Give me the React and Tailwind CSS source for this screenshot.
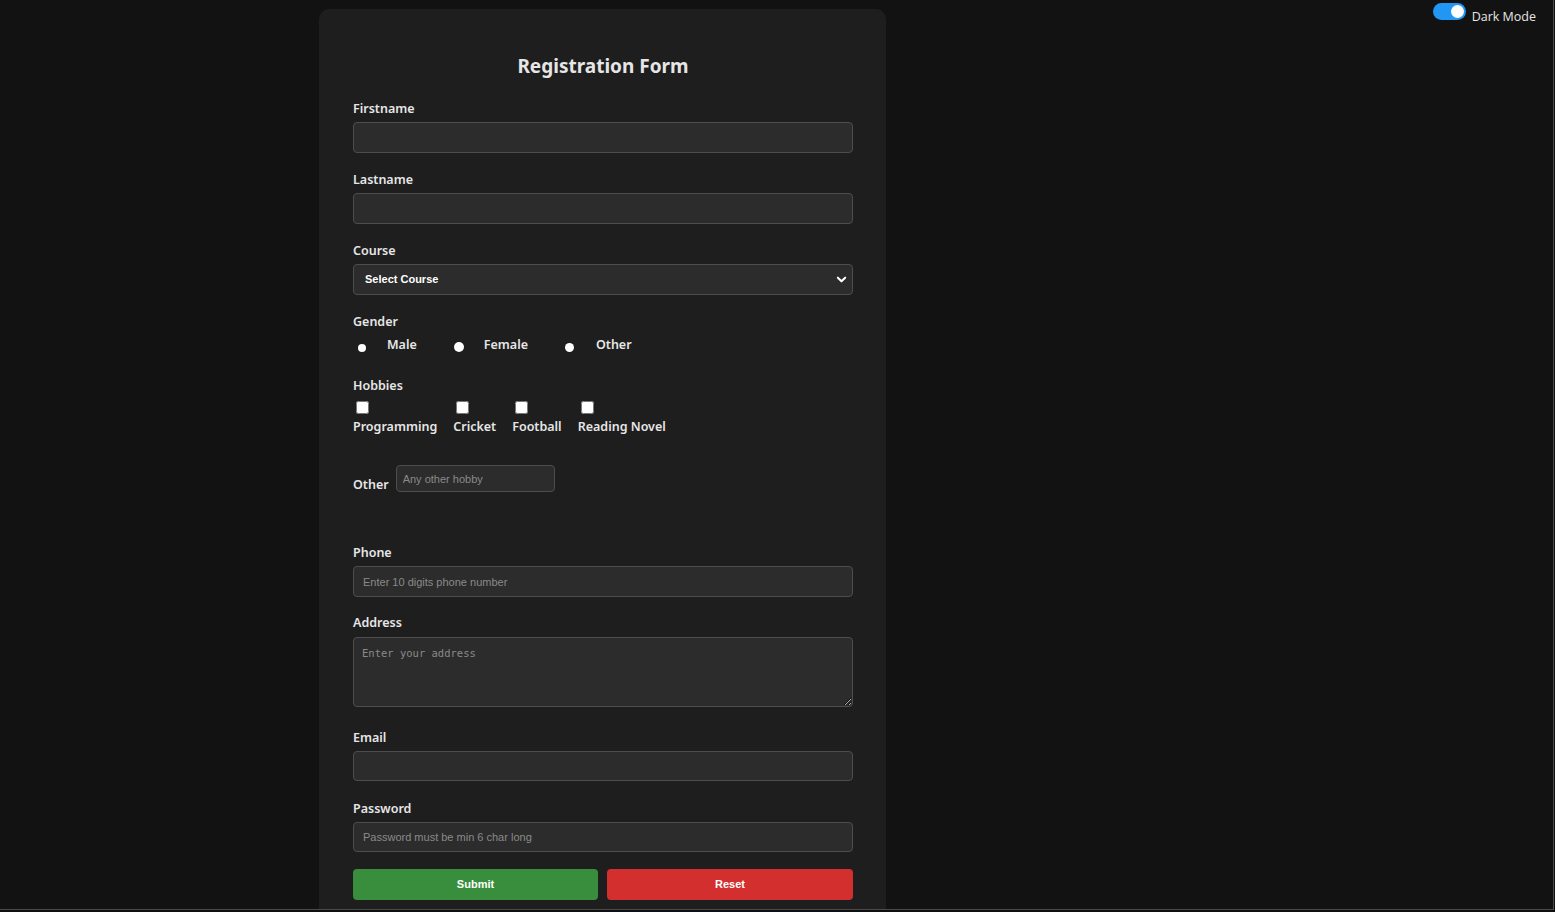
import React from "react";

const labelCls =
  "block pt-[1px] text-[12.5px] leading-[17px] font-semibold text-[#e6e6e6] [font-family:'Noto_Sans',sans-serif]";
const inputCls =
  "block w-[500px] rounded-[4px] border border-[#4d4d4d] bg-[#2c2c2c] px-[9px] text-[11px] text-white placeholder:text-[#8a8a8a] outline-none [font-family:'Liberation_Sans',Arial,sans-serif]";

function Field({ label, mt, gap = "mt-[5px]", children }) {
  return (
    <div className={mt}>
      <label className={labelCls}>{label}</label>
      <div className={gap}>{children}</div>
    </div>
  );
}

function Radio({ label, size, gapCls, mlCls }) {
  return (
    <label className={`flex items-center ${mlCls}`}>
      <span className="flex h-[18px] w-[18px] items-end justify-center pb-[1px]">
        <input
          type="radio"
          name="gender"
          className={`m-0 appearance-none rounded-full bg-white ${size}`}
        />
      </span>
      <span className={`${labelCls} ${gapCls}`}>{label}</span>
    </label>
  );
}

function Hobby({ label, first }) {
  return (
    <label className={`flex flex-col items-start ${first ? "" : "ml-[16px]"}`}>
      <input type="checkbox" className="m-0 ml-[3px] h-[13px] w-[13px]" />
      <span className={`${labelCls} mt-[3px]`}>{label}</span>
    </label>
  );
}

export default function App() {
  return (
    <div className="h-[912px] w-full overflow-hidden bg-[#0f0f0f]">
      <div className="relative h-[910px] w-[1554px] overflow-hidden border-r border-b border-[#4a4a4a] bg-[#121212]">
        {/* Dark mode toggle */}
        <div className="absolute right-[17px] top-[3px] flex items-start">
          <div className="flex h-[17px] w-[33px] items-center justify-end rounded-full bg-[#2196f3] pr-[2px]">
            <div className="h-[13px] w-[13px] rounded-full bg-white" />
          </div>
          <span className="ml-[6px] mt-[6px] text-[12.5px] leading-[16px] text-[#e6e6e6] [font-family:'Open_Sans',sans-serif]">
            Dark Mode
          </span>
        </div>

        {/* Card */}
        <div className="ml-[319px] mt-[9px] w-[567px] rounded-[10px] bg-[#1e1e1e] pl-[34px] pr-[33px] pt-[43px] pb-[34px]">
          <h2 className="h-[28px] text-center text-[19px] leading-[28px] font-bold text-[#e6e6e6] [font-family:'Noto_Sans',sans-serif]">
            Registration Form
          </h2>

          <Field label="Firstname" mt="mt-[19px]">
            <input type="text" className={`${inputCls} h-[31px]`} />
          </Field>

          <Field label="Lastname" mt="mt-[17px]">
            <input type="text" className={`${inputCls} h-[31px]`} />
          </Field>

          <Field label="Course" mt="mt-[17px]">
            <div className="relative w-[500px]">
              <select
                className={`${inputCls} h-[31px] appearance-none pl-[11px] font-bold`}
                defaultValue=""
              >
                <option value="">Select Course</option>
              </select>
              <svg
                className="pointer-events-none absolute right-[6px] top-[10px]"
                width="11"
                height="11"
                viewBox="0 0 12 12"
              >
                <path
                  d="M2 4 L6 8 L10 4"
                  fill="none"
                  stroke="white"
                  strokeWidth="2.2"
                  strokeLinecap="round"
                  strokeLinejoin="round"
                />
              </svg>
            </div>
          </Field>

          <div className="mt-[17px]">
            <div className={labelCls}>Gender</div>
            <div className="mt-[5px] flex items-center">
              <Radio label="Male" size="h-[8px] w-[8px]" gapCls="ml-[16px]" mlCls="" />
              <Radio label="Female" size="h-[10px] w-[10px]" gapCls="ml-[16px]" mlCls="ml-[33px]" />
              <Radio label="Other" size="h-[9px] w-[9px]" gapCls="ml-[17px]" mlCls="ml-[33px]" />
            </div>
          </div>

          <div className="mt-[23px]">
            <div className={labelCls}>Hobbies</div>
            <div className="mt-[7px] flex">
              <Hobby label="Programming" first />
              <Hobby label="Cricket" />
              <Hobby label="Football" />
              <Hobby label="Reading Novel" />
            </div>
          </div>

          <div className="mt-[30px] flex items-end">
            <label className={labelCls}>Other</label>
            <input
              type="text"
              placeholder="Any other hobby"
              className="ml-[7px] mb-[1px] h-[27px] w-[159px] rounded-[4px] border border-[#4d4d4d] bg-[#2c2c2c] px-[6px] text-[11px] text-white placeholder:text-[#8a8a8a] outline-none [font-family:'Liberation_Sans',Arial,sans-serif]"
            />
          </div>

          <Field label="Phone" mt="mt-[50px]">
            <input
              type="text"
              placeholder="Enter 10 digits phone number"
              className={`${inputCls} h-[31px]`}
            />
          </Field>

          <Field label="Address" mt="mt-[16px]" gap="mt-[6px]">
            <textarea
              placeholder="Enter your address"
              className="block h-[70px] w-[500px] rounded-[4px] border border-[#4d4d4d] bg-[#2c2c2c] px-[8px] pt-[8px] text-[10.5px] leading-[14px] text-white placeholder:text-[#8a8a8a] outline-none [font-family:'DejaVu_Sans_Mono',monospace]"
            />
          </Field>

          <Field label="Email" mt="mt-[21px]">
            <input type="email" className={`${inputCls} h-[30px]`} />
          </Field>

          <Field label="Password" mt="mt-[18px]">
            <input
              type="password"
              placeholder="Password must be min 6 char long"
              className={`${inputCls} h-[30px]`}
            />
          </Field>

          <div className="mt-[17px] flex gap-[9px]">
            <button className="h-[31px] w-[245px] rounded-[4px] bg-[#388e3c] text-[11px] font-bold text-white [font-family:'Liberation_Sans',Arial,sans-serif]">
              Submit
            </button>
            <button className="h-[31px] w-[246px] rounded-[4px] bg-[#d32f2f] text-[11px] font-bold text-white [font-family:'Liberation_Sans',Arial,sans-serif]">
              Reset
            </button>
          </div>
        </div>
      </div>
    </div>
  );
}
